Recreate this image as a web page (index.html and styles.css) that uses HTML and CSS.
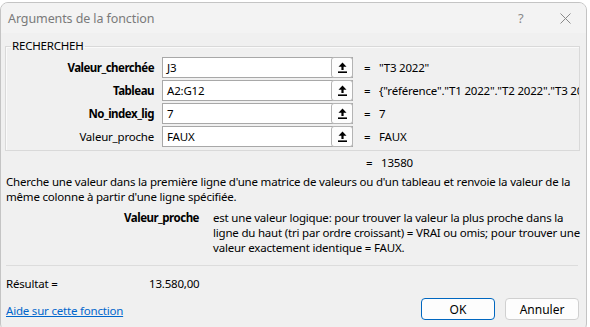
FILE: index.html
```html
<!DOCTYPE html>
<html lang="fr">
<head>
  <meta charset="UTF-8" />
  <title>Arguments de la fonction</title>
  <link rel="stylesheet" href="styles.css">
</head>
<body>
  <div class="window">
    <div class="titlebar">
      <span class="title">Arguments de la fonction</span>
      <span class="help">?</span>
      <svg class="close" width="11" height="11" viewBox="0 0 11 11">
        <path d="M0.5 0.5 L10.5 10.5 M10.5 0.5 L0.5 10.5" stroke="#8a8a8a" stroke-width="1" fill="none"/>
      </svg>
    </div>

    <div class="content">
      <fieldset class="args">
        <legend>RECHERCHEH</legend>

        <div class="arg-row">
          <label class="arg-name required">Valeur_cherchée</label>
          <div class="arg-input">
            <span class="arg-text">J3</span>
            <button class="ref-btn"><svg width="9" height="11" viewBox="0 0 9 11"><path d="M4.5 0.5 L8.5 4.8 L5.6 4.8 L5.6 8 L3.4 8 L3.4 4.8 L0.5 4.8 Z" fill="#000"/><rect x="0" y="9.4" width="9" height="1.6" fill="#000"/></svg></button>
          </div>
          <span class="eq">=</span>
          <span class="arg-value">"T3 2022"</span>
        </div>

        <div class="arg-row">
          <label class="arg-name required">Tableau</label>
          <div class="arg-input">
            <span class="arg-text">A2:G12</span>
            <button class="ref-btn"><svg width="9" height="11" viewBox="0 0 9 11"><path d="M4.5 0.5 L8.5 4.8 L5.6 4.8 L5.6 8 L3.4 8 L3.4 4.8 L0.5 4.8 Z" fill="#000"/><rect x="0" y="9.4" width="9" height="1.6" fill="#000"/></svg></button>
          </div>
          <span class="eq">=</span>
          <span class="arg-value">{"référence"."T1 2022"."T2 2022"."T3 2022"."T4 2022"}</span>
        </div>

        <div class="arg-row">
          <label class="arg-name required">No_index_lig</label>
          <div class="arg-input">
            <span class="arg-text">7</span>
            <button class="ref-btn"><svg width="9" height="11" viewBox="0 0 9 11"><path d="M4.5 0.5 L8.5 4.8 L5.6 4.8 L5.6 8 L3.4 8 L3.4 4.8 L0.5 4.8 Z" fill="#000"/><rect x="0" y="9.4" width="9" height="1.6" fill="#000"/></svg></button>
          </div>
          <span class="eq">=</span>
          <span class="arg-value">7</span>
        </div>

        <div class="arg-row">
          <label class="arg-name">Valeur_proche</label>
          <div class="arg-input">
            <span class="arg-text">FAUX</span>
            <button class="ref-btn"><svg width="9" height="11" viewBox="0 0 9 11"><path d="M4.5 0.5 L8.5 4.8 L5.6 4.8 L5.6 8 L3.4 8 L3.4 4.8 L0.5 4.8 Z" fill="#000"/><rect x="0" y="9.4" width="9" height="1.6" fill="#000"/></svg></button>
          </div>
          <span class="eq">=</span>
          <span class="arg-value">FAUX</span>
        </div>
      </fieldset>

      <div class="formula-result">
        <span class="eq">=</span>
        <span class="arg-value">13580</span>
      </div>

      <p class="description">
        Cherche une valeur dans la première ligne d'une matrice de valeurs ou d'un tableau et renvoie la valeur de la<br>
        même colonne à partir d'une ligne spécifiée.
      </p>

      <div class="arg-help">
        <span class="arg-help-name">Valeur_proche</span>
        <span class="arg-help-text">est une valeur logique: pour trouver la valeur la plus proche dans la<br>ligne du haut (tri par ordre croissant) = VRAI ou omis; pour trouver une<br>valeur exactement identique = FAUX.</span>
      </div>

      <div class="separator"></div>

      <div class="result">
        <span class="result-label">Résultat =</span>
        <span class="result-value">13.580,00</span>
      </div>

      <div class="footer">
        <a href="#" class="help-link">Aide sur cette fonction</a>
        <div class="buttons">
          <button class="dlg-btn default">OK</button>
          <button class="dlg-btn">Annuler</button>
        </div>
      </div>
    </div>
  </div>
</body>
</html>
```

FILE: styles.css
```css
body {
  margin: 0;
  background: #ffffff;
  font-family: "Noto Sans", "Open Sans", sans-serif;
  font-size: 11.5px;
  letter-spacing: -0.2px;
  color: #000;
}

.window {
  width: 587px;
  height: 330px;
  margin-top: 2px;
  background: #f0f0f0;
  border: 1px solid #c4c4c4;
  border-radius: 8px;
  box-sizing: border-box;
  overflow: hidden;
}

.titlebar {
  height: 30px;
  display: flex;
  align-items: center;
  background: #f3f3f3;
  position: relative;
}

.title {
  margin-left: 7px;
  color: #7a7a7a;
  font-size: 12.5px;
  letter-spacing: -0.1px;
}

.help {
  position: absolute;
  left: 517px;
  top: 6px;
  color: #8a8a8a;
  font-size: 13px;
}

.close {
  position: absolute;
  left: 559px;
  top: 10px;
}

.content {
  padding: 5px 6px 0 4px;
}

.args {
  margin: 0;
  padding: 3px 0 3px 0;
  border: 1px solid #d9d9d9;
  box-shadow: inset 1px 1px 0 #fafafa;
  min-width: 0;
}

.args legend {
  margin-left: 5px;
  padding: 0 1px;
  line-height: 16px;
}

.arg-row {
  display: flex;
  align-items: center;
  height: 21px;
  line-height: 16px;
  margin-bottom: 2px;
}

.arg-row:last-child {
  margin-bottom: 0;
}

.arg-name {
  width: 148px;
  text-align: right;
  margin-right: 8px;
}

.arg-name.required {
  font-weight: bold;
  letter-spacing: -0.5px;
}

.arg-input {
  width: 191px;
  height: 21px;
  box-sizing: border-box;
  border: 1px solid #a8a8a8;
  background: #fff;
  display: flex;
  align-items: center;
}

.arg-text {
  padding-left: 4px;
  flex: 1;
}

.ref-btn {
  width: 22px;
  height: 21px;
  margin: -1px -1px -1px 0;
  padding: 0;
  box-sizing: border-box;
  border: 1px solid #b4b4b4;
  border-radius: 3px;
  background: #fdfdfd;
  display: flex;
  align-items: center;
  justify-content: center;
}

.eq {
  width: 15px;
  margin-left: 11px;
}

.arg-value {
  white-space: nowrap;
  overflow: hidden;
  flex: 1;
}

.formula-result {
  display: flex;
  height: 16px;
  line-height: 16px;
  margin-top: 4px;
  padding-left: 350px;
}

.description {
  margin: 3px 0 0 1px;
  line-height: 15px;
  white-space: nowrap;
}

.arg-help {
  display: flex;
  margin-top: 6px;
  line-height: 15px;
  white-space: nowrap;
}

.arg-help-name {
  width: 194px;
  text-align: right;
  font-weight: bold;
  letter-spacing: -0.5px;
  margin-right: 14px;
}

.separator {
  height: 1px;
  background: #dcdcdc;
  margin: 10px 2px 0 1px;
}

.result {
  display: flex;
  margin-top: 10px;
  line-height: 16px;
  padding-left: 1px;
}

.result-label {
  width: 143px;
}

.footer {
  display: flex;
  justify-content: space-between;
  align-items: center;
  margin-top: 6px;
}

.help-link {
  color: #0066cc;
  text-decoration: underline;
  margin-left: 1px;
  margin-top: 3px;
}

.buttons {
  display: flex;
  gap: 10px;
  margin-right: 1px;
}

.dlg-btn {
  width: 74px;
  height: 22px;
  font-family: inherit;
  font-size: 12px;
  background: #fdfdfd;
  border: 1px solid #d0d0d0;
  border-radius: 4px;
  padding: 0;
}

.dlg-btn.default {
  border: 1px solid #0067c0;
  box-shadow: inset 0 0 0 1px #fdfdfd;
}
```
